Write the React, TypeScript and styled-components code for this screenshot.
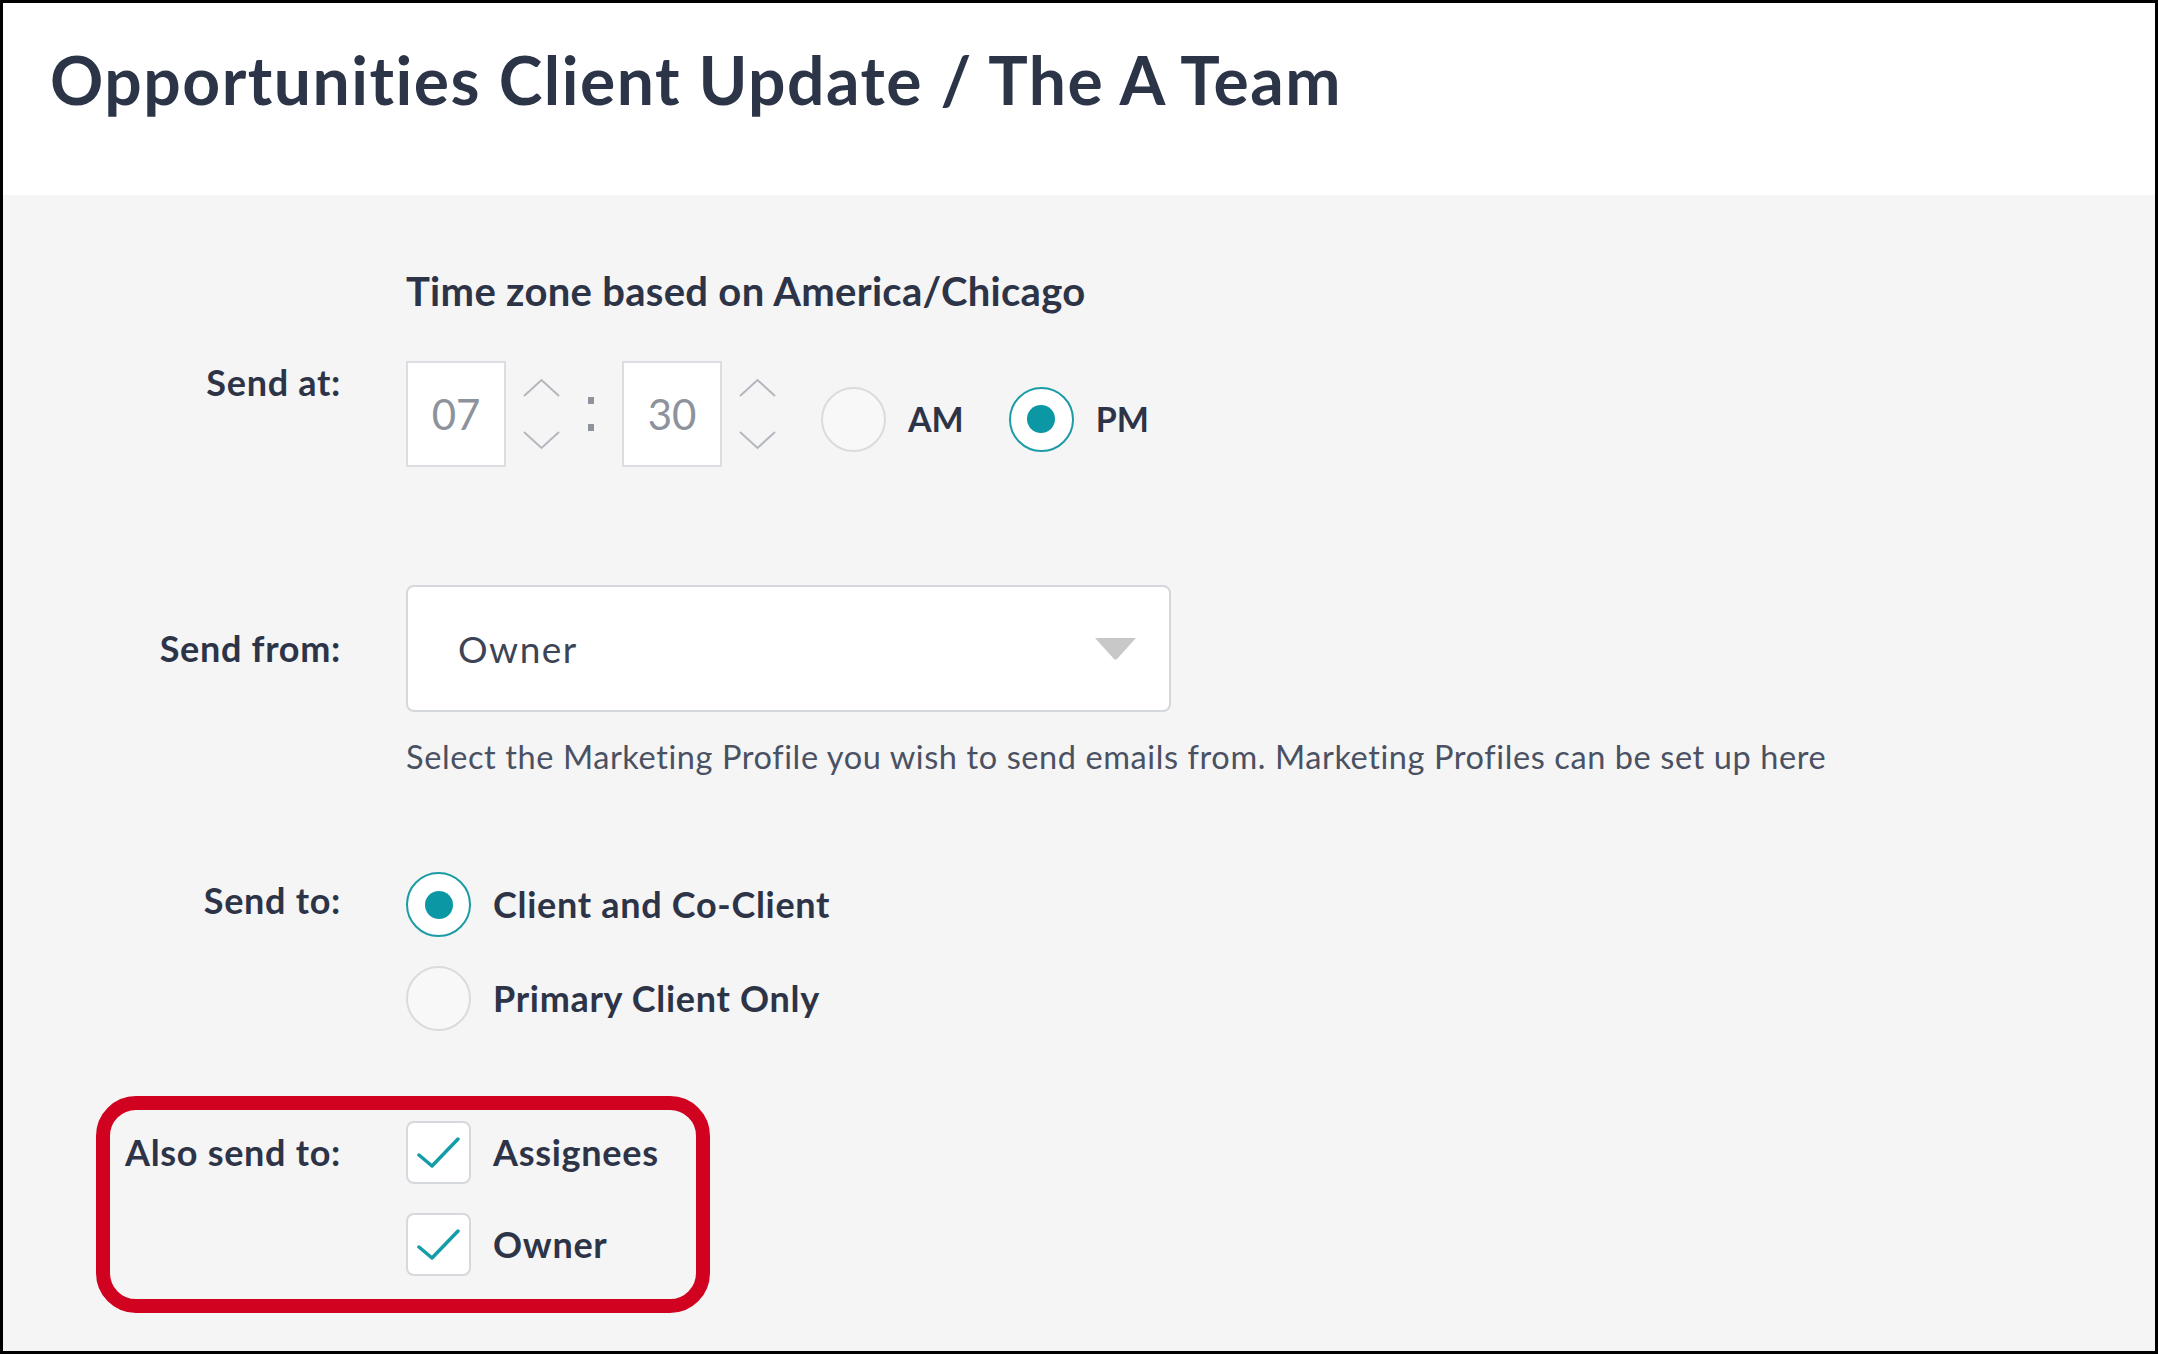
import React from 'react';
import styled, { createGlobalStyle } from 'styled-components';

const GlobalStyle = createGlobalStyle`
  html, body {
    margin: 0;
    padding: 0;
    background: #f5f5f5;
  }
  * {
    box-sizing: border-box;
  }
  body {
    font-family: Lato, "Noto Sans", "Liberation Sans", sans-serif;
    color: #2d3447;
  }
`;

const Frame = styled.div`
  width: 100vw;
  height: 100vh;
  border: 3px solid #000;
  display: flex;
  flex-direction: column;
  overflow: hidden;
`;

const Header = styled.header`
  height: 192px;
  background: #fff;
  padding: 37px 0 0 47px;
`;

const Title = styled.h1`
  margin: 0;
  font-size: 66px;
  line-height: 1.2;
  font-weight: 700;
  letter-spacing: 1.5px;
  color: #2c3548;
`;

const Body = styled.main`
  flex: 1;
  background: #f5f5f5;
  padding-top: 72px;
`;

const Row = styled.div<{ $mt?: number; $align?: string }>`
  position: relative;
  display: grid;
  grid-template-columns: 338px 1fr;
  column-gap: 65px;
  align-items: ${(p) => p.$align || 'start'};
  margin-top: ${(p) => p.$mt || 0}px;
`;

const Label = styled.label<{ $pt?: number }>`
  text-align: right;
  font-size: 36px;
  line-height: 1.2;
  font-weight: 700;
  letter-spacing: 0.7px;
  color: #2d3447;
  padding-top: ${(p) => p.$pt || 0}px;
`;

const TimeZone = styled.div`
  font-size: 40px;
  line-height: 1.2;
  font-weight: 700;
  letter-spacing: 0.3px;
  color: #2d3447;
`;

const TimeControls = styled.div`
  display: flex;
  align-items: center;
`;

const TimeBox = styled.div`
  width: 100px;
  height: 106px;
  background: #fff;
  border: 2px solid #dadde1;
  display: flex;
  align-items: center;
  justify-content: center;
  font-size: 42px;
  font-weight: 400;
  color: #8d929c;
`;

const Spinner = styled.div`
  height: 72px;
  width: 37px;
  margin-left: 17px;
  display: flex;
  flex-direction: column;
  justify-content: space-between;
`;

const Colon = styled.div`
  width: 62px;
  display: flex;
  flex-direction: column;
  align-items: center;
  gap: 20px;
  & > span {
    width: 6px;
    height: 7px;
    background: #8f949c;
  }
`;

const RadioCircle = styled.span<{ $checked?: boolean }>`
  flex: none;
  width: 65px;
  height: 65px;
  border-radius: 50%;
  border: 2px solid ${(p) => (p.$checked ? '#1a9ba6' : '#d9dcdf')};
  background: ${(p) => (p.$checked ? '#fff' : '#f8f8f8')};
  display: flex;
  align-items: center;
  justify-content: center;
  &::after {
    content: '';
    display: ${(p) => (p.$checked ? 'block' : 'none')};
    width: 28px;
    height: 28px;
    border-radius: 50%;
    background: #0b97a3;
  }
`;

const Option = styled.div<{ $ml?: number; $mt?: number }>`
  display: flex;
  align-items: center;
  gap: 22px;
  margin-left: ${(p) => p.$ml || 0}px;
  margin-top: ${(p) => p.$mt || 0}px;
`;

const OptionText = styled.span<{ $tight?: boolean }>`
  font-size: ${(p) => (p.$tight ? 34 : 36)}px;
  line-height: 1.2;
  font-weight: 700;
  letter-spacing: ${(p) => (p.$tight ? 0 : 0.7)}px;
  color: #2d3447;
`;

const OptionList = styled.div`
  display: flex;
  flex-direction: column;
  gap: 29px;
`;

const Select = styled.div`
  width: 765px;
  height: 127px;
  background: #fff;
  border: 2px solid #d4d7db;
  border-radius: 8px;
  display: flex;
  align-items: center;
  justify-content: space-between;
  padding: 0 32px 0 50px;
  font-size: 37px;
  letter-spacing: 1.5px;
  color: #3d4455;
`;

const Help = styled.p`
  margin: 25px 0 0;
  font-size: 32.5px;
  line-height: 1.2;
  letter-spacing: 0.6px;
  color: #4a5163;
`;

const CheckBox = styled.span`
  flex: none;
  width: 65px;
  height: 63px;
  border-radius: 8px;
  border: 2px solid #d5d9dd;
  background: #fff;
  display: flex;
  align-items: center;
  justify-content: center;
`;

const Highlight = styled.div`
  position: absolute;
  left: 93px;
  top: -25px;
  width: 614px;
  height: 217px;
  border: 14px solid #d0021f;
  border-radius: 40px;
  pointer-events: none;
`;

const Chevron = ({ up }: { up?: boolean }) => (
  <svg width="37" height="20" viewBox="0 0 37 20">
    <polyline
      points={up ? '1,18 18.5,2 36,18' : '1,2 18.5,18 36,2'}
      fill="none"
      stroke="#b3b7bd"
      strokeWidth="2"
    />
  </svg>
);

const Check = () => (
  <svg width="44" height="32" viewBox="0 0 44 32">
    <polyline
      points="2,18 15,29 41,2"
      fill="none"
      stroke="#149ca7"
      strokeWidth="3.5"
      strokeLinecap="round"
      strokeLinejoin="round"
    />
  </svg>
);

const Caret = () => (
  <svg width="43" height="24" viewBox="0 0 43 24">
    <path d="M1 1 H42 L23 22 Q21.5 23.5 20 22 Z" fill="#c8c8c8" />
  </svg>
);

const TimeField = ({ value }: { value: string }) => (
  <>
    <TimeBox>{value}</TimeBox>
    <Spinner>
      <Chevron up />
      <Chevron />
    </Spinner>
  </>
);

const App: React.FC = () => {
  return (
    <>
      <GlobalStyle />
      <Frame>
        <Header>
          <Title>Opportunities Client Update / The A Team</Title>
        </Header>
        <Body>
          <Row>
            <span />
            <TimeZone>Time zone based on America/Chicago</TimeZone>
          </Row>

          <Row $mt={46}>
            <Label $pt={0}>Send at:</Label>
            <TimeControls>
              <TimeField value="07" />
              <Colon>
                <span />
                <span />
              </Colon>
              <TimeField value="30" />
              <Option $ml={45} $mt={10}>
                <RadioCircle />
                <OptionText $tight>AM</OptionText>
              </Option>
              <Option $ml={45} $mt={10}>
                <RadioCircle $checked />
                <OptionText $tight>PM</OptionText>
              </Option>
            </TimeControls>
          </Row>

          <Row $mt={118} $align="center">
            <Label>Send from:</Label>
            <Select>
              <span>Owner</span>
              <Caret />
            </Select>
          </Row>
          <Row>
            <span />
            <Help>
              Select the Marketing Profile you wish to send emails from. Marketing Profiles can be set up here
            </Help>
          </Row>

          <Row $mt={96}>
            <Label $pt={7}>Send to:</Label>
            <OptionList>
              <Option>
                <RadioCircle $checked />
                <OptionText>Client and Co-Client</OptionText>
              </Option>
              <Option>
                <RadioCircle />
                <OptionText>Primary Client Only</OptionText>
              </Option>
            </OptionList>
          </Row>

          <Row $mt={90}>
            <Label $pt={10}>Also send to:</Label>
            <OptionList>
              <Option>
                <CheckBox>
                  <Check />
                </CheckBox>
                <OptionText>Assignees</OptionText>
              </Option>
              <Option>
                <CheckBox>
                  <Check />
                </CheckBox>
                <OptionText>Owner</OptionText>
              </Option>
            </OptionList>
            <Highlight />
          </Row>
        </Body>
      </Frame>
    </>
  );
};

export default App;
